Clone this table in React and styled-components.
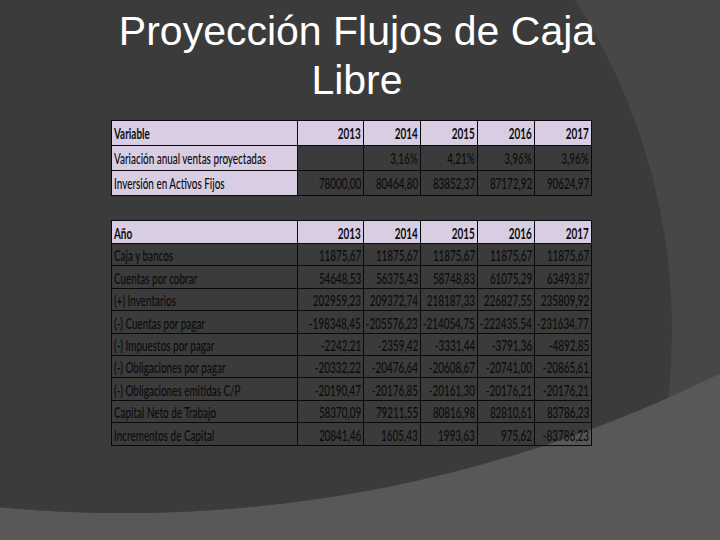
import React from 'react';
import styled, { createGlobalStyle } from 'styled-components';

const GlobalStyle = createGlobalStyle`
  html, body {
    margin: 0;
    padding: 0;
  }
  body {
    background: #3b3b3b;
  }
`;

const years = ['2013', '2014', '2015', '2016', '2017'];

const variables = [
  ['Variación anual ventas proyectadas', '', '3,16%', '4,21%', '3,96%', '3,96%'],
  ['Inversión en Activos Fijos', '78000,00', '80464,80', '83852,37', '87172,92', '90624,97'],
];

const balance = [
  ['Caja y bancos', '11875,67', '11875,67', '11875,67', '11875,67', '11875,67'],
  ['Cuentas por cobrar', '54648,53', '56375,43', '58748,83', '61075,29', '63493,87'],
  ['(+) Inventarios', '202959,23', '209372,74', '218187,33', '226827,55', '235809,92'],
  ['(-) Cuentas por pagar', '-198348,45', '-205576,23', '-214054,75', '-222435,54', '-231634,77'],
  ['(-) Impuestos por pagar', '-2242,21', '-2359,42', '-3331,44', '-3791,36', '-4892,85'],
  ['(-) Obligaciones por pagar', '-20332,22', '-20476,64', '-20608,67', '-20741,00', '-20865,61'],
  ['(-) Obligaciones emitidas C/P', '-20190,47', '-20176,85', '-20161,30', '-20176,21', '-20176,21'],
  ['Capital Neto de Trabajo', '58370,09', '79211,55', '80816,98', '82810,61', '83786,23'],
  ['Incrementos de Capital', '20841,46', '1605,43', '1993,63', '975,62', '-83786,23'],
];

const Slide = styled.div`
  position: relative;
  width: 720px;
  height: 540px;
  overflow: hidden;
`;

const Backdrop = styled.svg`
  position: absolute;
  inset: 0;
`;

const Content = styled.div`
  position: relative;
  display: flex;
  flex-direction: column;
`;

const Title = styled.h1`
  width: 540px;
  margin: 7px 0 0 87px;
  font: 400 41px/49px "Liberation Sans", Arial, sans-serif;
  color: #ffffff;
  text-align: center;
`;

const Tables = styled.div`
  display: flex;
  flex-direction: column;
  gap: 24px;
  padding: 15px 0 0 111px;
`;

const Grid = styled.div`
  display: grid;
  width: max-content;
  grid-template-columns: 186px 66px repeat(4, 57px);
  grid-template-rows: ${(p) => p.$rows};
  border-top: 1px solid #0a0a0a;
  border-left: 1px solid #0a0a0a;
`;

const Cell = styled.div`
  box-sizing: border-box;
  display: flex;
  align-items: flex-end;
  justify-content: ${(p) => (p.$label ? 'flex-start' : 'flex-end')};
  padding: 0 2px ${(p) => (p.$tall ? 4 : 2)}px;
  border-right: 1px solid #0a0a0a;
  border-bottom: 1px solid #0a0a0a;
  background: ${(p) => (p.$fill ? '#d8cde3' : 'transparent')};
  color: #0c0c0c;
`;

const Txt = styled.span`
  display: inline-block;
  white-space: nowrap;
  font: ${(p) => (p.$bold ? 700 : 500)} 15px/1 Lato, "Open Sans", sans-serif;
  transform: scaleX(0.66);
  transform-origin: ${(p) => (p.$label ? 'left' : 'right')} center;
`;

function Background() {
  return (
    <Backdrop width="720" height="540" viewBox="0 0 720 540">
      <defs>
        <clipPath id="upper">
          <circle cx="124" cy="-830" r="1343" />
        </clipPath>
      </defs>
      <rect width="720" height="540" fill="#585858" />
      <circle cx="124" cy="-830" r="1343" fill="#474747" />
      <circle cx="62" cy="330" r="610" fill="#3b3b3b" clipPath="url(#upper)" />
    </Backdrop>
  );
}

function DataTable({ head, rows, rowHeights, labelFill, tall }) {
  return (
    <Grid $rows={rowHeights}>
      {[head, ...years].map((h, i) => (
        <Cell key={h} $fill $label={i === 0} $tall={tall}>
          <Txt $bold $label={i === 0}>{h}</Txt>
        </Cell>
      ))}
      {rows.map((row) =>
        row.map((v, i) => (
          <Cell key={row[0] + i} $label={i === 0} $fill={i === 0 && labelFill} $tall={tall}>
            <Txt $label={i === 0}>{v}</Txt>
          </Cell>
        ))
      )}
    </Grid>
  );
}

export default function App() {
  return (
    <>
      <GlobalStyle />
      <Slide>
        <Background />
        <Content>
          <Title>Proyección Flujos de Caja Libre</Title>
          <Tables>
            <DataTable head="Variable" rows={variables} rowHeights="25px 25px 25px" labelFill tall />
            <DataTable head="Año" rows={balance} rowHeights="23px repeat(9, 22.4px)" />
          </Tables>
        </Content>
      </Slide>
    </>
  );
}
